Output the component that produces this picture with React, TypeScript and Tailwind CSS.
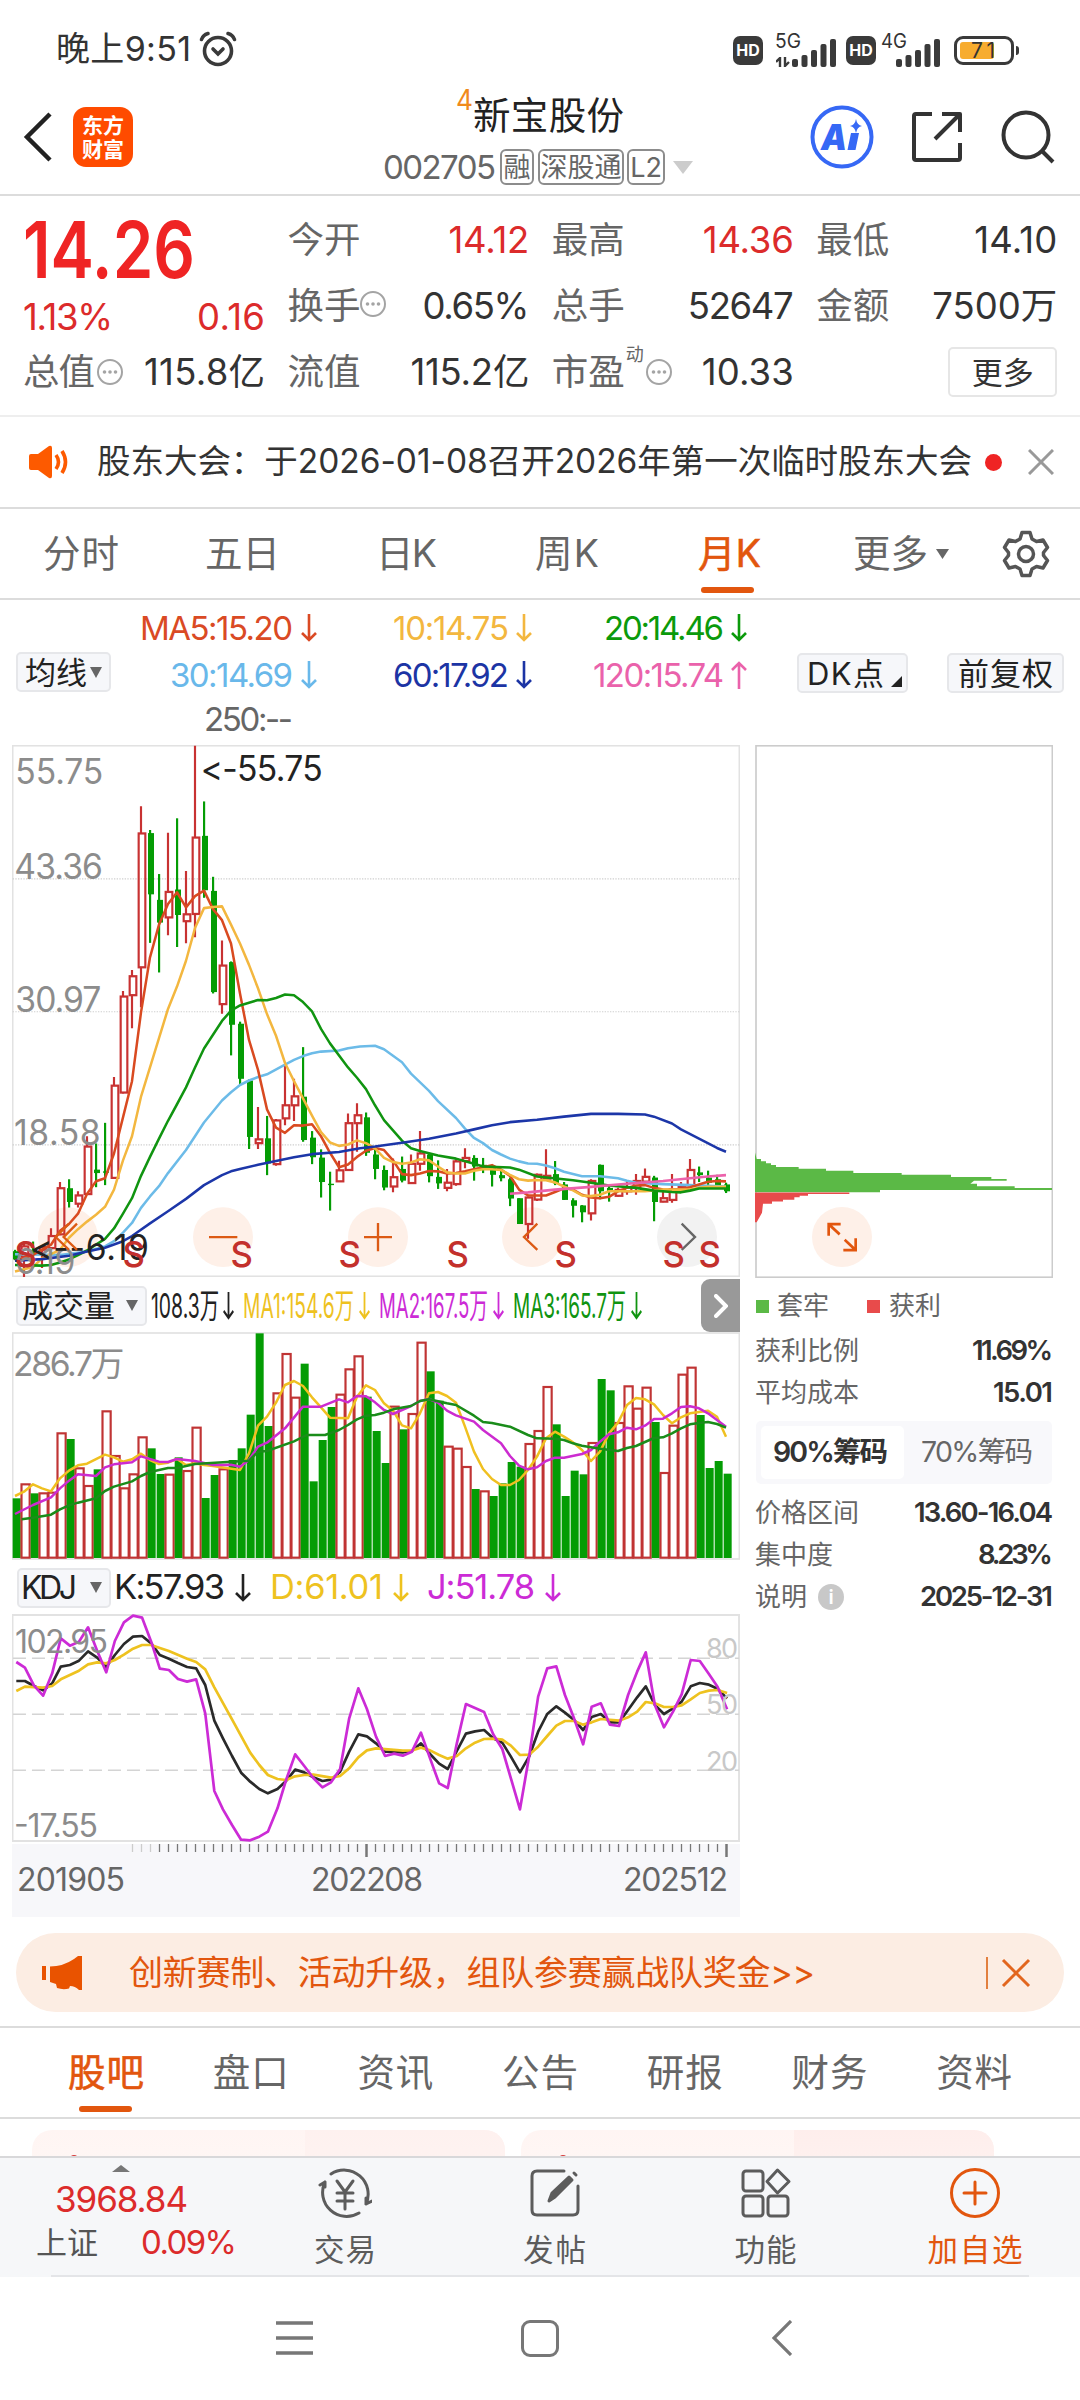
import React, { useLayoutEffect, useRef } from "react";

/* Spreads (or squeezes) a run of text over the width that its box is given. */
function Fit({ children, className = "", squeeze = false }: { children: string; className?: string; squeeze?: boolean }) {
  const outer = useRef<HTMLSpanElement>(null);
  const inner = useRef<HTMLSpanElement>(null);
  useLayoutEffect(() => {
    const box = outer.current;
    const run = inner.current;
    if (!box || !run) return;
    run.style.letterSpacing = "0px";
    run.style.transform = "none";
    const natural = run.getBoundingClientRect().width;
    const target = box.clientWidth + 2;
    if (squeeze) run.style.transform = `scaleX(${target / natural})`;
    else run.style.letterSpacing = `${(target - natural) / Math.max(1, children.length - 1)}px`;
  }, [children, squeeze]);
  return (
    <span ref={outer} className={`block shrink-0 whitespace-nowrap ${className}`}>
      <span ref={inner} className="-ml-px inline-block origin-left">
        {children}
      </span>
    </span>
  );
}

const Arrow = ({ up = false, className = "" }: { up?: boolean; className?: string }) => (
  <svg viewBox="0 0 16 28" preserveAspectRatio="none" className={`h-7 w-4 shrink-0 ${className}`} fill="none" stroke="currentColor" strokeWidth="2.6">
    <path d={up ? "M8 28V2M1 9l7-7 7 7" : "M8 0v26M1 19l7 7 7-7"} />
  </svg>
);

const Caret = ({ className = "" }: { className?: string }) => (
  <svg viewBox="0 0 12 10" preserveAspectRatio="none" className={`h-[10px] w-3 shrink-0 ${className}`} fill="currentColor">
    <path d="M0 0h12L6 10z" />
  </svg>
);

const Dots = ({ className = "" }: { className?: string }) => (
  <svg viewBox="0 0 28 28" className={`h-7 w-7 shrink-0 text-[#a4a4a4] ${className}`} fill="currentColor">
    <circle cx="14" cy="14" r="12" fill="none" stroke="currentColor" strokeWidth="2" />
    <circle cx="8.5" cy="14" r="1.8" />
    <circle cx="14" cy="14" r="1.8" />
    <circle cx="19.5" cy="14" r="1.8" />
  </svg>
);

const Hd = () => (
  <span className="flex h-[29px] w-[30px] items-center justify-center rounded-[7px] bg-[#3a3a3a] text-[16px] font-bold text-white">HD</span>
);

const Bars = ({ className = "" }: { className?: string }) => (
  <svg viewBox="0 0 44 28" className={`h-7 w-11 ${className}`} fill="#3a3a3a">
    <rect x="0" y="20" width="6" height="8" rx="2" />
    <rect x="9.500" y="16" width="6" height="12" rx="2" />
    <rect x="19" y="11" width="6" height="17" rx="2" />
    <rect x="28.500" y="5" width="6" height="23" rx="2" />
    <rect x="38" y="0" width="6" height="28" rx="2" />
  </svg>
);

function StatusBar() {
  return (
    <div className="flex h-[75px] items-start text-[#333]">
      <div className="flex h-[98px] items-center pl-[57px]">
        <Fit className="w-[133px] text-[34px]">晚上9:51</Fit>
        <svg viewBox="0 0 38 36" className="ml-[9px] h-9 w-[38px]" fill="none" stroke="#3a3a3a" strokeWidth="3.6" strokeLinecap="round">
          <circle cx="19" cy="20" r="13.5" />
          <path d="M2.5 8.5Q4 4 9 2.5M35.500 8.500Q34 4 29 2.500" />
          <path d="M14 18l5 5 5-5" />
        </svg>
      </div>
      <div className="ml-auto flex h-[100px] items-center pr-[61px]">
        <Hd />
        <div className="relative ml-[13px] h-[34px] w-[60px]">
          <span className="absolute -top-[2px] left-0">
            <Fit className="w-6 text-[20px]" squeeze>5G</Fit>
          </span>
          <svg viewBox="0 0 14 10" className="absolute bottom-0 left-0 h-[10px] w-[14px]" fill="none" stroke="#3a3a3a" strokeWidth="2.400">
            <path d="M4 10V1L0 5M9 0v9l4-4" />
          </svg>
          <Bars className="absolute right-0 bottom-0" />
        </div>
        <div className="ml-[10px]">
          <Hd />
        </div>
        <div className="relative ml-[6px] h-[34px] w-[58px]">
          <span className="absolute -top-[2px] left-0">
            <Fit className="w-6 text-[20px]" squeeze>4G</Fit>
          </span>
          <Bars className="absolute right-0 bottom-0" />
        </div>
        <div className="ml-[14px] flex h-[29px] w-[60px] items-center rounded-[9px] border-[3px] border-[#3a3a3a] p-[3px]">
          <div className="flex h-full w-[34px] items-center justify-end rounded-[3px] bg-[#f7ac2f]">
            <Fit className="w-[22px] text-[21px]">71</Fit>
          </div>
        </div>
        <div className="ml-[2px] h-[9px] w-[3px] rounded-r bg-[#3a3a3a]" />
      </div>
    </div>
  );
}

const Badge = ({ children, className }: { children: string; className: string }) => (
  <span className={`flex h-[36px] items-center justify-center rounded-[6px] border-2 border-[#8c8c8c] text-[27px] ${className}`}>{children}</span>
);

function Header() {
  return (
    <div className="flex h-[121px] items-start border-b-2 border-[#dcdcdc]">
      <svg viewBox="0 0 30 50" className="mt-[37px] ml-[22px] h-[50px] w-[30px]" fill="none" stroke="#222" strokeWidth="4.500">
        <path d="M28 2L5 25l23 23" />
      </svg>
      <div className="mt-[32px] ml-[21px] flex h-[60px] w-[60px] flex-col items-center justify-center gap-[3px] rounded-[13px] bg-[#ff4b00] text-[21px] font-bold text-white">
        <span>东方</span>
        <span>财富</span>
      </div>
      <div className="ml-[251px] flex w-[309px] flex-col">
        <div className="mt-[11px] flex h-[60px] pl-[73px]">
          <Fit className="w-[15px] text-[28px] text-[#f08a1c]" squeeze>4</Fit>
          <Fit className="mt-[11px] ml-[2px] w-[149px] text-[37.500px] text-[#222]">新宝股份</Fit>
        </div>
        <div className="mt-[3px] flex h-[36px] items-center text-[#666]">
          <Fit className="w-[111px] text-[33px]">002705</Fit>
          <Badge className="ml-[5px] w-[34px]">融</Badge>
          <Badge className="ml-1 w-[86px]">深股通</Badge>
          <Badge className="ml-[3px] w-[38px]">L2</Badge>
          <Caret className="ml-[8px] h-[13px] w-[20px] text-[#ccc]" />
        </div>
      </div>
      <svg viewBox="0 0 64 64" className="mt-[30px] ml-[117px] h-16 w-16">
        <circle cx="32" cy="32" r="29.500" fill="none" stroke="#3668f5" strokeWidth="4" />
        <text x="11" y="45" fontSize="35" fontWeight="900" fontStyle="italic" fill="#3668f5" textLength="26" lengthAdjust="spacingAndGlyphs">A</text>
        <path d="M41 28h8l-3.500 17h-8z" fill="#3668f5" />
        <path d="M46 14q1 6 6 7-5 1-6 7-1-6-6-7 5-1 6-7z" fill="#3668f5" />
      </svg>
      <svg viewBox="0 0 52 52" className="mt-[36px] ml-[37px] h-[52px] w-[52px]" fill="none" stroke="#333" strokeWidth="4" strokeLinejoin="round">
        <path d="M21 3H5q-2 0-2 2v42q0 2 2 2h42q2 0 2-2V32" />
        <path d="M31 3h18v18M49 3L24 28" />
      </svg>
      <svg viewBox="0 0 54 54" className="mt-[35px] ml-[38px] h-[54px] w-[54px]" fill="none" stroke="#333" strokeWidth="4">
        <circle cx="25" cy="25" r="22.500" />
        <path d="M40 40l12 12" />
      </svg>
    </div>
  );
}

function Quote() {
  return (
    <div className="grid h-[221px] grid-cols-[240px_240px_240px_239px] gap-x-[24.4px] border-b-2 border-[#eee] pl-6 text-[36.500px] text-[#333]">
      <div className="flex flex-col pt-[9px]">
        <div className="flex h-[90px] items-center">
          <Fit squeeze className="w-[170px] text-[78px] font-semibold text-[#ef2424]">14.26</Fit>
        </div>
        <div className="mt-[4px] flex h-9 items-center justify-between text-[#dc2b2b]">
          <Fit className="w-[88px]">1.13%</Fit>
          <Fit className="w-[66px]">0.16</Fit>
        </div>
        <div className="mt-[19px] flex h-9 items-center">
          <Fit className="w-[70px] text-[#666]">总值</Fit>
          <Dots className="ml-[2px]" />
          <Fit className="ml-auto w-[119px]">115.8亿</Fit>
        </div>
      </div>
      {[
        [
          <><Fit className="w-[71px] text-[#666]">今开</Fit><Fit className="ml-auto w-[79px] text-[#dc2b2b]">14.12</Fit></>,
          <><Fit className="w-[71px] text-[#666]">换手</Fit><Dots className="mb-1" /><Fit className="ml-auto w-[105px]">0.65%</Fit></>,
          <><Fit className="w-[71px] text-[#666]">流值</Fit><Fit className="ml-auto w-[117px]">115.2亿</Fit></>,
        ],
        [
          <><Fit className="w-[71px] text-[#666]">最高</Fit><Fit className="ml-auto w-[89px] text-[#dc2b2b]">14.36</Fit></>,
          <><Fit className="w-[71px] text-[#666]">总手</Fit><Fit className="ml-auto w-[104px]">52647</Fit></>,
          <><Fit className="w-[71px] text-[#666]">市盈</Fit><span className="mb-[34px] ml-[2px] text-[18px] text-[#666]">动</span><Dots className="ml-[1px]" /><Fit className="ml-auto w-[90px]">10.33</Fit></>,
        ],
        [
          <><Fit className="w-[71px] text-[#666]">最低</Fit><Fit className="ml-auto w-[81px]">14.10</Fit></>,
          <><Fit className="w-[71px] text-[#666]">金额</Fit><Fit className="ml-auto w-[123px]">7500万</Fit></>,
          <span className="-mr-[1px] ml-auto flex h-[50px] w-[109px] items-center justify-center rounded-[5px] border-2 border-[#e6e6e6] text-[31px]">更多</span>,
        ],
      ].map((column, c) => (
        <div key={c} className="flex flex-col gap-[30px] pt-[26px]">
          {column.map((cell, r) => (
            <div key={r} className="flex h-9 items-center">{cell}</div>
          ))}
        </div>
      ))}
    </div>
  );
}

function Notice() {
  return (
    <div className="flex h-[92px] items-center border-b-2 border-[#dcdcdc]">
      <svg viewBox="0 0 40 34" className="ml-[29px] h-[34px] w-10" fill="#fd5a00">
        <path d="M2 9h7L20 1q3-1 3 2v28q0 3-3 2L9 25H2q-2 0-2-2V11q0-2 2-2z" />
        <path d="M27 10q5 7 0 14M33 6q7 11 0 22" fill="none" stroke="#fd5a00" strokeWidth="3.600" />
      </svg>
      <Fit className="ml-[29px] w-[873px] text-[33.500px] text-[#333]">股东大会：于2026-01-08召开2026年第一次临时股东大会</Fit>
      <span className="ml-[14px] h-[17px] w-[17px] rounded-full bg-[#ef2424]" />
      <svg viewBox="0 0 26 26" className="ml-[26px] h-[26px] w-[26px]" stroke="#999" strokeWidth="3">
        <path d="M1 1l24 24M25 1L1 25" />
      </svg>
    </div>
  );
}

function PeriodTabs() {
  return (
    <div className="flex h-[91px] items-start border-b-2 border-[#dcdcdc] text-[37.500px] text-[#666]">
      <div className="flex h-[90px] items-center">
        <Fit className="ml-11 w-[74px]">分时</Fit>
        <Fit className="ml-[88px] w-[73px]">五日</Fit>
        <Fit className="ml-[98px] w-[59px]">日K</Fit>
        <Fit className="ml-[100px] w-[62px]">周K</Fit>
        <div className="relative ml-[101px] text-[#e2560e]">
          <Fit className="w-[61px] [-webkit-text-stroke:0.6px_currentColor]">月K</Fit>
          <span className="absolute -bottom-[20px] left-[2px] h-[6px] w-[53px] rounded-full bg-[#e2560e]" />
        </div>
        <Fit className="ml-[94px] w-[73px]">更多</Fit>
        <Caret className="ml-[9px] w-[13px]" />
        <svg viewBox="0 0 48 48" className="ml-[53px] h-12 w-12" fill="none" stroke="#555" strokeWidth="3.500" strokeLinejoin="round">
          <path d="M20 2.500h8l2 6.500 4.500 2.500 6.500-1.500 4.500 7.500-4 5v3l4 5-4.500 7.500-6.500-1.500-4.500 2.500-2 6.500h-8l-2-6.500-4.500-2.500-6.500 1.500-4.500-7.500 4-5v-3l-4-5L7 10l6.500 1.500L18 9z" />
          <circle cx="24" cy="24" r="7.500" />
        </svg>
      </div>
    </div>
  );
}

const Chip = ({ children, className }: { children: React.ReactNode; className: string }) => (
  <span className={`flex h-[40px] shrink-0 items-center rounded-[5px] border-2 border-[#e6e7ea] bg-[#f6f7fa] text-[#222] ${className}`}>{children}</span>
);

function MaLegend() {
  return (
    <div className="flex h-[145px] text-[33px]">
      <Chip className="mt-[52px] ml-[16px] w-[95px] pl-2 text-[31px]">
        <Fit className="w-[60px]">均线</Fit>
        <Caret className="ml-1 h-[11px] text-[#666]" />
      </Chip>
      <div className="grid h-[142px] w-[206px] grid-rows-[50px_44px_45px] items-center justify-items-end pt-[3px]">
        <div className="flex items-center text-[#da4a24]"><Fit className="w-[151px]">MA5:15.20</Fit><Arrow className="ml-[9px]" /></div>
        <div className="flex items-center text-[#69b8ea]"><Fit className="w-[121px]">30:14.69</Fit><Arrow className="ml-[9px]" /></div>
        <div className="mr-[25px] text-[#666]"><Fit className="w-[87px]">250:--</Fit></div>
      </div>
      <div className="grid h-[97px] w-[215px] grid-rows-[50px_44px] items-center justify-items-end pt-[3px]">
        <div className="flex items-center text-[#f3b73f]"><Fit className="w-[114px]">10:14.75</Fit><Arrow className="ml-[8px]" /></div>
        <div className="flex items-center text-[#1c34a4]"><Fit className="w-[114px]">60:17.92</Fit><Arrow className="ml-[8px]" /></div>
      </div>
      <div className="grid h-[97px] w-[215px] grid-rows-[50px_44px] items-center justify-items-end pt-[3px]">
        <div className="flex items-center text-[#0b9a0b]"><Fit className="w-[118px]">20:14.46</Fit><Arrow className="ml-[8px]" /></div>
        <div className="flex items-center text-[#ea62ab]"><Fit className="w-[129px]">120:15.74</Fit><Arrow up className="ml-[8px]" /></div>
      </div>
      <Chip className="mt-[53px] ml-[50px] w-[111px] pl-[9px] text-[31px]">
        <Fit className="w-[75px]">DK点</Fit>
        <svg viewBox="0 0 11 11" className="mt-[17px] ml-[8px] h-[11px] w-[11px]" fill="#222"><path d="M11 0v11H0z" /></svg>
      </Chip>
      <Chip className="mt-[53px] ml-[39px] w-[117px] pl-[10px] text-[31px]">
        <Fit className="w-[93px]">前复权</Fit>
      </Chip>
    </div>
  );
}

/* [rising, high, body top, body bottom, low] for each month, in plot units. */
const candles: [0 | 1, number, number, number, number][] = [
  [0, 1480, 1484, 1508, 1510], [1, 1455, 1470, 1500, 1562], [0, 1456, 1480, 1495, 1500], [1, 1468, 1472, 1480, 1533],
  [1, 1417, 1440, 1475, 1478], [1, 1283, 1301, 1435, 1438], [0, 1275, 1301, 1341, 1357], [1, 1310, 1322, 1346, 1357],
  [1, 1150, 1180, 1318, 1320], [0, 1171, 1247, 1257, 1298], [0, 1111, 1252, 1256, 1292], [1, 978, 1003, 1271, 1273],
  [1, 728, 744, 1023, 1026], [1, 667, 685, 740, 836], [1, 191, 270, 659, 775], [0, 260, 269, 447, 588],
  [0, 388, 463, 529, 674], [1, 268, 440, 514, 566], [0, 226, 433, 507, 600], [1, 379, 505, 525, 589],
  [1, 15, 282, 504, 572], [0, 177, 277, 435, 457], [0, 396, 437, 731, 735], [1, 581, 654, 766, 794],
  [0, 642, 644, 826, 915], [0, 817, 823, 983, 1001], [0, 985, 988, 1152, 1187], [1, 1065, 1159, 1170, 1187],
  [0, 1091, 1156, 1229, 1263], [1, 1100, 1104, 1231, 1236], [1, 940, 1060, 1098, 1118], [1, 983, 1034, 1060, 1106],
  [0, 891, 1035, 1161, 1166], [0, 1135, 1154, 1211, 1231], [0, 1188, 1212, 1283, 1328], [0, 1253, 1288, 1292, 1366],
  [1, 1221, 1249, 1281, 1283], [1, 1084, 1112, 1248, 1250], [1, 1054, 1089, 1112, 1195], [0, 1081, 1095, 1198, 1207],
  [0, 1188, 1203, 1245, 1275], [0, 1235, 1248, 1299, 1307], [1, 1215, 1269, 1296, 1313], [0, 1209, 1245, 1279, 1284],
  [1, 1203, 1230, 1286, 1288], [1, 1135, 1200, 1230, 1250], [0, 1200, 1203, 1266, 1284], [0, 1220, 1268, 1287, 1303],
  [1, 1245, 1285, 1300, 1310], [1, 1218, 1223, 1289, 1294], [1, 1185, 1213, 1222, 1243], [0, 1205, 1213, 1238, 1279],
  [0, 1213, 1233, 1240, 1257], [0, 1233, 1240, 1262, 1296], [0, 1250, 1263, 1272, 1281], [0, 1270, 1275, 1331, 1353],
  [0, 1330, 1330, 1405, 1405], [1, 1325, 1328, 1405, 1448], [1, 1258, 1262, 1334, 1338], [1, 1188, 1265, 1273, 1278],
  [0, 1222, 1260, 1287, 1292], [0, 1283, 1290, 1335, 1335], [0, 1330, 1336, 1352, 1386], [0, 1350, 1351, 1371, 1400],
  [1, 1275, 1280, 1374, 1395], [0, 1232, 1233, 1310, 1333], [0, 1290, 1300, 1312, 1340], [1, 1300, 1306, 1323, 1325],
  [1, 1280, 1299, 1310, 1320], [1, 1260, 1280, 1300, 1320], [1, 1244, 1268, 1282, 1290], [0, 1265, 1270, 1341, 1397],
  [1, 1310, 1330, 1340, 1342], [1, 1260, 1304, 1335, 1343], [1, 1283, 1297, 1303, 1310], [1, 1216, 1248, 1292, 1295],
  [0, 1238, 1255, 1263, 1283], [0, 1250, 1270, 1285, 1300], [0, 1262, 1275, 1297, 1300], [0, 1285, 1290, 1310, 1315],
];

const averages: [string, string][] = [
  ["#6cbbe8", "45,1493 180,1495 261,1485 315,1470 342,1455 369,1430 396,1402 423,1358 450,1325 477,1295 504,1257 558,1190 612,1110 666,1046 693,1022 720,1001 747,988 774,978 801,970 855,942 882,928 909,917 936,909 963,904 1017,901 1044,894 1080,889 1125,887 1152,897 1206,935 1233,968 1287,1018 1314,1048 1368,1097 1395,1128 1422,1155 1449,1170 1476,1190 1503,1203 1530,1215 1557,1223 1584,1229 1611,1230 1638,1235 1665,1243 1692,1253 1746,1266 1800,1266 1854,1272 1881,1279 1908,1285 1989,1289 2070,1292 2178,1296"],
  ["#d94a20", "45,1512 99,1495 153,1465 180,1425 207,1405 234,1375 261,1318 288,1281 315,1272 342,1200 369,1095 396,990 423,790 450,630 477,535 504,475 531,441 558,485 585,452 612,436 639,490 666,522 693,590 720,735 747,870 774,957 801,1072 828,1125 855,1140 882,1118 909,1119 936,1115 963,1150 990,1198 1017,1240 1044,1232 1071,1210 1098,1192 1125,1184 1152,1190 1179,1220 1206,1260 1233,1263 1260,1258 1287,1251 1314,1252 1341,1258 1368,1257 1395,1252 1422,1246 1449,1240 1476,1234 1503,1247 1530,1265 1557,1305 1584,1322 1638,1322 1665,1312 1692,1301 1719,1305 1746,1320 1773,1328 1800,1330 1827,1326 1854,1310 1881,1300 1908,1293 1935,1292 1962,1300 1989,1305 2016,1306 2043,1303 2070,1298 2097,1290 2124,1282 2151,1280 2178,1281"],
  ["#f3b73f", "45,1543 99,1530 126,1505 180,1480 207,1445 234,1420 261,1398 288,1378 315,1355 342,1305 369,1220 396,1150 423,1035 450,950 477,865 504,780 531,715 558,640 585,545 612,487 639,484 666,482 693,535 720,590 747,652 774,720 801,795 828,858 855,937 882,990 909,1040 936,1090 963,1138 990,1168 1017,1178 1044,1174 1071,1162 1098,1170 1125,1185 1152,1213 1179,1225 1206,1230 1233,1226 1260,1217 1287,1220 1314,1238 1341,1255 1368,1258 1395,1258 1422,1250 1449,1246 1476,1246 1503,1248 1530,1262 1557,1275 1584,1279 1611,1277 1638,1278 1665,1284 1692,1296 1719,1307 1746,1322 1773,1324 1800,1320 1827,1310 1854,1310 1935,1310 1989,1305 2070,1305 2097,1300 2124,1297 2178,1297"],
  ["#109410", "45,1524 126,1526 153,1524 180,1517 207,1508 234,1495 261,1482 288,1465 315,1448 342,1418 369,1375 396,1330 423,1265 450,1210 477,1157 504,1105 531,1057 558,1008 585,950 612,895 639,855 666,815 693,785 720,770 747,762 774,754 801,755 828,748 855,738 882,740 909,760 936,787 963,838 990,880 1044,950 1071,980 1098,1013 1125,1060 1152,1103 1179,1133 1206,1163 1233,1185 1260,1193 1314,1206 1368,1215 1422,1230 1449,1238 1530,1241 1557,1247 1611,1267 1719,1278 1773,1285 1827,1293 1908,1300 1962,1308 2016,1312 2043,1313 2070,1308 2097,1302 2178,1302"],
  ["#1c36a8", "45,1512 126,1507 207,1497 261,1485 315,1474 369,1455 396,1440 450,1403 504,1368 558,1332 612,1292 666,1263 693,1252 720,1245 774,1233 828,1222 882,1211 936,1202 1017,1196 1080,1185 1125,1180 1206,1169 1287,1157 1368,1142 1422,1130 1476,1118 1530,1109 1611,1102 1692,1093 1773,1085 1854,1085 1935,1087 1962,1093 2016,1113 2043,1130 2097,1157 2151,1184 2178,1195"],
  ["#ec62ab", "1530,1317 1584,1313 1665,1305 1773,1297 1881,1288 1989,1280 2070,1272 2124,1267 2178,1263"],
];

function PriceChart() {
  return (
    <svg viewBox="36 13 2184 1546" preserveAspectRatio="none" className="block h-[532px] w-[728px] [font-variant-ligatures:none] [font-feature-settings:'calt'_0]" fill="none" fontSize="101">
      <rect x="38" y="15" width="2180" height="1542" stroke="#e2e2e2" strokeWidth="5" />
      {[402, 788, 1175].map((y) => (
        <path key={y} d={`M38 ${y}H2218`} stroke="#d0d0d0" strokeWidth="3" strokeDasharray="4 4" />
      ))}
      {[204, 669, 1134, 1596].map((x) => (
        <ellipse key={x} cx={x} cy="1443" rx="90" ry="87" fill="#fef0e8" />
      ))}
      <ellipse cx="2061" cy="1443" rx="90" ry="87" fill="#f2f2f2" />
      {candles.map(([up, high, top, bottom, low], i) => {
        const x = 45 + 27 * i;
        return up ? (
          <g key={i} stroke="#c83232" strokeWidth="6.500">
            <path d={`M${x} ${high}V${top}M${x} ${bottom}V${low}`} />
            <rect x={x - 7} y={top} width="20" height={bottom - top} />
          </g>
        ) : (
          <g key={i} fill="#049c04">
            <rect x={x - 3} y={high} width="6.500" height={low - high} />
            <rect x={x - 6} y={top} width="18" height={bottom - top} />
          </g>
        );
      })}
      {averages.map(([color, points]) => (
        <polyline key={color} points={points} stroke={color} strokeWidth="7.500" strokeLinejoin="round" />
      ))}
      <g fill="#8c8c8c">
        <text x="46" y="125" textLength="264">55.75</text>
        <text x="43" y="402" textLength="266">43.36</text>
        <text x="46" y="790" textLength="258">30.97</text>
        <text x="42" y="1176" textLength="260">18.58</text>
        <text x="46" y="1550" textLength="180">6.19</text>
      </g>
      <g fill="#222">
        <text x="602" y="119" textLength="366">&lt;-55.75</text>
        <text x="91" y="1510" textLength="356">&lt;--6.19</text>
      </g>
      <g stroke="#dc5a14" strokeWidth="7">
        <path d="M207 1404l-40 39 40 37M231 1404l-40 39 40 37" />
        <path d="M627 1443h85M1092 1443h84M1134 1402v82M1612 1404l-40 39 40 37" />
        <path d="M2045 1404l40 39-40 37" stroke="#666" />
      </g>
      <g fill="#c3302c" fontSize="104" fontWeight="500" textAnchor="middle">
        {[77, 401, 725, 1049, 1373, 1697, 2021, 2129].map((x) => (
          <text key={x} x={x} y="1529">S</text>
        ))}
      </g>
    </svg>
  );
}

/* Top edge of each month's bar; falling months are negative. */
const volumes = [
  -685, 643, -670, 670, 668, 490, -507, 595, 648, -598, 424, 558, 655, 613, 502, -535, -612, 614, -562, 603,
  473, -684, -615, 598, -570, -535, -434, -190, -468, 370, 252, 383, -281, -634, -510, -411, 374, 298, 259, -380,
  -483, -579, 410, -478, 432, 218, -304, -392, 530, 536, 591, -657, 664, -678, -640, -576, -590, 522, 483, 351,
  -463, -678, -602, -613, 519, -327, -361, 459, 349, 416, 353, -456, 609, 467, 314, 293, -435, -594, -573, -611,
];

const volumeLines: [string, string][] = [
  ["#f0c020", "45,678 72,665 99,643 126,655 153,664 180,625 207,602 234,586 261,581 315,554 342,562 369,575 396,568 423,551 450,570 477,582 504,578 531,567 558,585 585,580 612,585 639,588 720,600 747,550 774,467 801,440 828,398 855,345 882,333 909,348 936,382 963,412 990,443 1044,445 1071,380 1098,346 1125,360 1152,400 1179,422 1206,466 1233,475 1260,430 1287,370 1314,366 1341,378 1368,398 1395,470 1422,545 1449,597 1476,627 1503,645 1530,645 1557,630 1584,600 1611,560 1638,505 1665,485 1692,500 1719,517 1746,540 1773,573 1800,545 1827,490 1854,458 1881,405 1908,384 1935,388 1962,403 1989,435 2016,460 2043,442 2070,430 2097,426 2124,422 2151,440 2178,500"],
  ["#cc2bd0", "45,732 99,705 153,682 180,655 207,632 234,613 288,618 315,592 342,583 396,577 423,559 477,575 504,576 531,567 585,573 639,585 693,584 720,590 747,570 774,530 801,518 855,475 909,410 963,410 1017,388 1044,397 1071,378 1098,379 1125,397 1152,420 1179,432 1206,420 1233,408 1260,393 1287,387 1314,398 1341,422 1368,436 1422,455 1449,480 1503,520 1530,558 1557,587 1584,598 1611,592 1638,573 1665,563 1692,563 1746,552 1773,540 1800,515 1827,493 1854,487 1881,473 1908,478 1935,467 1962,447 1989,446 2016,430 2043,411 2070,409 2097,415 2124,430 2178,470"],
  ["#1a8c1a", "65,748 99,743 153,734 180,718 207,706 234,698 288,685 315,663 342,650 396,634 423,618 450,606 504,594 531,594 585,582 693,575 747,572 774,545 801,543 882,514 920,495 975,495 1017,480 1044,465 1071,448 1098,437 1125,435 1152,428 1179,418 1233,408 1260,393 1287,388 1341,400 1368,405 1422,437 1449,456 1476,459 1530,470 1584,495 1611,505 1665,506 1692,510 1719,520 1746,527 1800,536 1854,543 1881,534 1908,528 1962,504 1989,502 2016,490 2043,475 2070,463 2097,459 2124,456 2151,462 2178,473"],
];

function VolumeChart() {
  return (
    <svg viewBox="36 186 2184 684" preserveAspectRatio="none" className="block h-[228px] w-[728px]" fill="none" fontSize="101">
      <rect x="38" y="189" width="2180" height="678" stroke="#e2e2e2" strokeWidth="5" />
      {volumes.map((v, i) =>
        v < 0 ? (
          <rect key={i} x={38 + 27 * i} y={-v} width="24" height={864 + v} fill="#049c04" />
        ) : (
          <rect key={i} x={37.5 + 27 * i} y={v} width="24.500" height={863 - v} fill="#fff" stroke="#c03434" strokeWidth="6.500" />
        ),
      )}
      {volumeLines.map(([color, points]) => (
        <polyline key={color} points={points} stroke={color} strokeWidth="7.500" strokeLinejoin="round" />
      ))}
      <text x="39" y="319" fill="#8c8c8c" textLength="334">286.7万</text>
    </svg>
  );
}

const kdjLines: [string, string][] = [
  ["#2a2a2a", "34,303 52,303 71,318 90,331 109,310 127,260 146,255 165,242 184,214 203,233 222,261 240,225 259,192 278,170 297,168 316,190 334,225 353,236 372,249 391,261 410,265 429,315 448,422 466,475 485,528 504,578 523,605 542,627 560,640 580,627 598,603 617,569 636,577 655,592 674,603 692,599 711,575 730,515 749,463 767,469 786,490 805,515 842,517 861,513 880,490 899,522 918,551 936,567 955,513 974,461 993,454 1012,450 1031,475 1050,488 1068,530 1087,577 1106,530 1125,455 1144,402 1163,379 1181,398 1200,420 1219,450 1237,411 1256,402 1275,427 1294,427 1313,390 1332,352 1350,319 1369,375 1388,402 1407,385 1425,365 1444,319 1463,309 1482,314 1500,326 1520,355"],
  ["#eec21f", "34,333 52,320 90,323 109,318 127,298 165,272 184,253 203,247 222,250 240,240 259,224 278,206 297,195 316,195 334,204 353,213 391,236 410,246 429,268 448,322 485,418 523,518 542,555 560,585 580,597 598,600 617,589 636,585 655,584 692,593 711,588 730,565 749,532 767,511 786,505 842,512 861,511 880,503 899,511 918,525 936,536 955,528 974,505 993,488 1012,477 1031,476 1050,479 1068,497 1087,525 1106,524 1125,500 1144,468 1163,437 1181,423 1200,423 1219,434 1237,427 1256,417 1294,422 1313,412 1332,395 1350,366 1369,370 1388,381 1407,381 1425,376 1444,358 1463,339 1482,332 1500,330 1520,339"],
  ["#cc2bd6", "34,246 52,263 71,317 90,347 109,280 127,175 146,197 165,185 184,142 203,212 222,277 240,183 259,127 278,107 297,113 316,185 334,266 353,270 372,297 391,305 410,298 429,400 448,633 466,688 485,735 504,779 523,781 542,770 560,755 580,685 598,600 617,523 636,558 655,594 674,622 692,607 711,567 730,415 749,325 767,387 786,470 805,528 824,521 842,527 861,515 880,458 899,535 918,610 936,624 955,490 974,372 993,384 1012,396 1031,463 1050,507 1068,595 1087,688 1106,530 1125,350 1144,265 1163,259 1181,345 1200,415 1219,493 1237,380 1256,370 1275,434 1294,438 1313,345 1332,275 1350,217 1369,375 1388,442 1407,395 1425,343 1444,240 1463,243 1482,282 1500,320 1520,388"],
];

function KdjChart() {
  return (
    <div className="relative h-[228px] w-[728px]">
      <svg viewBox="25 102 1522 684" preserveAspectRatio="none" className="block h-full w-full" fill="none">
        <rect x="26" y="105" width="1519" height="678" stroke="#e2e2e2" strokeWidth="2" vectorEffect="non-scaling-stroke" />
        {[235, 403, 571].map((y) => (
          <path key={y} d={`M27 ${y}H1545`} stroke="#d4d4d4" strokeWidth="1.500" strokeDasharray="13 6" vectorEffect="non-scaling-stroke" />
        ))}
        {kdjLines.map(([color, points]) => (
          <polyline key={color} points={points} stroke={color} strokeWidth="2.700" strokeLinejoin="round" vectorEffect="non-scaling-stroke" />
        ))}
      </svg>
      <svg viewBox="12 1614 728 228" className="absolute inset-0 h-full w-full" fill="#8c8c8c" fontSize="32">
        <text x="15" y="1652.500" textLength="93">102.95</text>
        <text x="14" y="1837" textLength="84">-17.55</text>
        <g fill="#c8c8c8" fontSize="27">
          <text x="706" y="1658" textLength="32">80</text>
          <text x="706" y="1714" textLength="32">50</text>
          <text x="706" y="1771" textLength="32">20</text>
        </g>
      </svg>
    </div>
  );
}

function TimeAxis() {
  return (
    <div className="mt-[2px] flex h-[73px] w-[728px] flex-col bg-[#f7f7fa]">
      <svg viewBox="12 0 728 14" className="h-[14px] w-full">
        {Array.from({ length: 67 }, (_, k) => {
          const i = k + 13;
          const major = i === 39 || i === 79;
          return <path key={i} d={`M${15.500 + 9 * i} 0V${major ? 13 : 8}`} stroke={i < 16 ? "#ccc" : "#777"} strokeWidth={major ? 2.500 : 1.300} />;
        })}
      </svg>
      <div className="flex h-[44px] items-center text-[32px] text-[#666]">
        <Fit className="ml-[6px] w-[106px]">201905</Fit>
        <Fit className="ml-[188px] w-[110px]">202208</Fit>
        <Fit className="ml-[202px] w-[103px]">202512</Fit>
      </div>
    </div>
  );
}

function ChipChart() {
  return (
    <svg viewBox="45 14 894 1492" preserveAspectRatio="none" className="block h-[533px] w-[298px]" fill="none">
      <rect x="48" y="16" width="889" height="1488" stroke="#cccccc" strokeWidth="5" />
      <path d="M45 1155L50 1173H63V1179H78V1185H93V1190H108V1195H176V1200H258V1206H340V1212H485V1217H633V1223H754V1229H800V1234H702L691 1242H711V1249H824V1254H936V1260H420V1266H45z" fill="#5bb946" />
      <path d="M45 1267H328V1271H204V1276H179V1280H163V1287H129V1292H96V1298H69L66 1323 50 1350H45z" fill="#e84b4b" />
      <ellipse cx="306" cy="1391" rx="90" ry="84" fill="#fef0e8" />
      <path d="M302 1355H266V1388M266 1355L299 1384M310 1428H347V1395M347 1428L314 1399" stroke="#e2560e" strokeWidth="8" />
    </svg>
  );
}

const Stat = ({ label, value, labelWidth, valueWidth, info }: { label: string; value: string; labelWidth: string; valueWidth: string; info?: boolean }) => (
  <div className="flex h-[42px] items-center">
    <Fit className={`text-[26px] text-[#666] ${labelWidth}`}>{label}</Fit>
    {info && <span className="ml-3 flex h-[26px] w-[26px] items-center justify-center rounded-full bg-[#c8c8c8] text-[20px] font-semibold text-white">i</span>}
    <Fit className={`ml-auto text-[27.500px] font-semibold text-[#333] ${valueWidth}`}>{value}</Fit>
  </div>
);

function ChipStats() {
  return (
    <div className="w-[296px]">
      <div className="flex h-[42px] items-center pt-[14px] text-[26px] text-[#666]">
        <span className="h-[13px] w-[13px] bg-[#5bb946]" />
        <Fit className="ml-[9px] w-[50px]">套牢</Fit>
        <span className="ml-[39px] h-[13px] w-[13px] bg-[#e84b4b]" />
        <Fit className="ml-[10px] w-[50px]">获利</Fit>
      </div>
      <div className="mt-[10px]">
        <Stat label="获利比例" value="11.69%" labelWidth="w-[102px]" valueWidth="w-[79px]" />
        <Stat label="平均成本" value="15.01" labelWidth="w-[102px]" valueWidth="w-[58px]" />
      </div>
      <div className="mt-[7px] flex h-[63px] items-center rounded-[5px] bg-[#f8f8fb] p-[5px] text-[28.500px]">
        <span className="flex h-[53px] w-[143px] items-center justify-center rounded-[5px] bg-white pr-[4px] font-semibold text-[#333]">
          <Fit className="w-[113px]">90%筹码</Fit>
        </span>
        <span className="flex flex-1 justify-center pl-[3px] text-[#666]">
          <Fit className="w-[110px]">70%筹码</Fit>
        </span>
      </div>
      <div className="mt-[8px]">
        <Stat label="价格区间" value="13.60-16.04" labelWidth="w-[102px]" valueWidth="w-[137px]" />
        <Stat label="集中度" value="8.23%" labelWidth="w-[76px]" valueWidth="w-[73px]" />
        <Stat label="说明" value="2025-12-31" labelWidth="w-[50px]" valueWidth="w-[131px]" info />
      </div>
    </div>
  );
}

function Charts() {
  return (
    <div className="flex h-[1172px] pl-3">
      <div className="w-[728px]">
        <PriceChart />
        <div className="flex h-[57px] items-center text-[34px]">
          <Chip className="ml-1 w-[131px] pl-[5px] text-[31px]">
            <Fit className="w-[91px]">成交量</Fit>
            <Caret className="ml-3 h-[11px] text-[#666]" />
          </Chip>
          <div className="ml-[5px] flex items-center text-[#222]"><Fit squeeze className="w-[66px]">108.3万</Fit><Arrow className="ml-[5px] w-[11px]" /></div>
          <div className="ml-[10px] flex items-center text-[#eec21f]"><Fit squeeze className="w-[109px]">MA1:154.6万</Fit><Arrow className="ml-[6px] w-[11px]" /></div>
          <div className="ml-[10px] flex items-center text-[#cc2bd6]"><Fit squeeze className="w-[107px]">MA2:167.5万</Fit><Arrow className="ml-[6px] w-[11px]" /></div>
          <div className="ml-[10px] flex items-center text-[#109410]"><Fit squeeze className="w-[111px]">MA3:165.7万</Fit><Arrow className="ml-[6px] w-[11px]" /></div>
          <span className="ml-auto flex h-[53px] w-[39px] items-center justify-center rounded-l-[9px] bg-[#999]">
            <svg viewBox="0 0 14 24" className="h-6 w-[14px]" fill="none" stroke="#fff" strokeWidth="4" strokeLinecap="round"><path d="M2 2l10 10L2 22" /></svg>
          </span>
        </div>
        <div className="-mt-[2px]">
          <VolumeChart />
        </div>
        <div className="flex h-[54px] items-center pt-px text-[34.500px]">
          <Chip className="ml-[5px] w-[94px] pl-[3px] text-[32px]">
            <Fit className="w-[54px]">KDJ</Fit>
            <Caret className="ml-[14px] h-[11px] text-[#666]" />
          </Chip>
          <Fit className="ml-1 w-[109px] text-[#222]">K:57.93</Fit>
          <Arrow className="ml-[11px] text-[#222]" />
          <Fit className="ml-[20px] w-[111px] text-[#eec21f]">D:61.01</Fit>
          <Arrow className="ml-[11px] text-[#eec21f]" />
          <Fit className="ml-[19px] w-[106px] text-[#cc2bd6]">J:51.78</Fit>
          <Arrow className="ml-[11px] text-[#cc2bd6]" />
        </div>
        <KdjChart />
        <TimeAxis />
      </div>
      <div className="ml-[15px]">
        <ChipChart />
        <div className="pl-px">
          <ChipStats />
        </div>
      </div>
    </div>
  );
}

function Banner() {
  return (
    <div className="mx-4 mt-4 flex h-[79px] items-center rounded-full bg-[#fcede3] text-[#e2560e]">
      <svg viewBox="0 0 40 34" className="ml-[26px] h-[34px] w-10" fill="#e95300">
        <path d="M0 10h4v14H0zM8 10.500q13 0 24-7.500l4-3h4v34h-3q-4-4-9-4l-1 2.500q-6 1.500-12-.5l-1-4-6-2z" />
      </svg>
      <Fit className="ml-[48px] w-[684px] text-[34px]">创新赛制、活动升级，组队参赛赢战队奖金&gt;&gt;</Fit>
      <span className="ml-auto h-8 w-[2px] bg-[#e2803f]" />
      <svg viewBox="0 0 30 30" className="mr-[33px] ml-[13px] h-[30px] w-[30px]" stroke="#e2661e" strokeWidth="3">
        <path d="M2 2l26 26M28 2L2 28" />
      </svg>
    </div>
  );
}

function SectionTabs() {
  return (
    <div className="mt-[14px] flex h-[93px] gap-[70.700px] border-y-2 border-[#dcdcdc] pt-[26px] pl-[69px] text-[37.500px] text-[#666]">
      <div className="relative text-[#e2560e]">
        <Fit className="w-[74px] [-webkit-text-stroke:0.6px_currentColor]">股吧</Fit>
        <span className="absolute top-[52px] left-[10px] h-[6px] w-[53px] rounded-full bg-[#e2560e]" />
      </div>
      {["盘口", "资讯", "公告", "研报", "财务", "资料"].map((name) => (
        <Fit key={name} className="w-[74px]">{name}</Fit>
      ))}
    </div>
  );
}

function Posts() {
  return (
    <div className="flex h-[37px] gap-4 overflow-hidden pt-[11px] pl-8">
      {["from-[#fef1ef]", "from-[#feeeec]"].map((tone) => (
        <div key={tone} className="relative h-16 w-[473px] overflow-hidden rounded-[20px] bg-gradient-to-b from-[#fff5f3] to-[#fef8f6]">
          <div className={`h-full w-[200px] translate-x-[273px] bg-gradient-to-b to-[#fef4f2] ${tone}`} />
          <span className="absolute top-[25px] left-[37px] h-3 w-[10px] rounded-full bg-[#d63a3a]" />
        </div>
      ))}
    </div>
  );
}

const Action = ({ label, width, children, className = "" }: { label: string; width: string; children: React.ReactNode; className?: string }) => (
  <div className={`flex flex-col items-center pt-[8px] text-[30.500px] ${className}`}>
    <svg viewBox="0 0 54 54" className="h-[54px] w-[54px]" fill="none" stroke="currentColor" strokeWidth="3" strokeLinecap="round" strokeLinejoin="round">
      {children}
    </svg>
    <Fit className={`mt-[15px] ${width}`}>{label}</Fit>
  </div>
);

function BottomBar() {
  return (
    <div className="relative flex h-[121px] border-t-2 border-[#d8d8da] bg-[#f6f7f9] text-[#5c5c5c]">
      <div className="w-[242px]">
        <svg viewBox="0 0 18 7" className="mt-[7px] ml-[112px] h-[7px] w-[18px]" fill="#777"><path d="M9 0l9 7H0z" /></svg>
        <Fit className="mt-[10px] ml-[56px] w-[131px] text-[35px] text-[#dc2b2b]">3968.84</Fit>
        <div className="mt-[9px] ml-[37px] flex items-center text-[31px]">
          <Fit className="w-[60px] text-[#555]">上证</Fit>
          <Fit className="ml-[45px] w-[94px] text-[33px] text-[#dc2b2b]">0.09%</Fit>
        </div>
      </div>
      <Action label="交易" width="w-[60px]" className="w-[206px]">
        <path d="M13 8A24 24 0 0 1 48 38M41 47A24 24 0 0 1 7 16M7 16l-5 3M7 16v5M48 38l6-3M48 38l0-6" />
        <path d="M19 15l8 11 8-11M27 26v17M19 27h16M19 35h16" />
      </Action>
      <Action label="发帖" width="w-[61px]" className="w-[213px]">
        <path d="M36 5H9Q4 5 4 10V44Q4 49 9 49H45Q50 49 50 44V20" />
        <path d="M21 35l3-8L41 11l3 3-17 17zM46 7l2 2" fill="currentColor" />
      </Action>
      <Action label="功能" width="w-[60px]" className="w-[209px]">
        <rect x="4" y="5" width="20" height="20" rx="3" />
        <rect x="4" y="30" width="20" height="20" rx="3" />
        <rect x="29" y="30" width="20" height="20" rx="3" />
        <path d="M38.500 4L50 15.500 38.500 27 28 15.500z" />
      </Action>
      <Action label="加自选" width="w-[93px]" className="w-[210px] text-[#e2560e]">
        <circle cx="27" cy="27" r="23.500" />
        <path d="M27 16v22M16 27h22" />
      </Action>
      <span className="absolute bottom-0 left-[51px] h-[2px] w-[978px] bg-[#e4e5e8]" />
    </div>
  );
}

function NavBar() {
  return (
    <div className="flex h-[122px] items-center text-[#777]">
      <svg viewBox="0 0 38 34" className="ml-[276px] h-[34px] w-[38px]" stroke="currentColor" strokeWidth="3.500">
        <path d="M0 2h37M0 17h37M0 32h37" />
      </svg>
      <span className="ml-[207px] h-[37px] w-[38px] rounded-[9px] border-[3.5px] border-current" />
      <svg viewBox="0 0 20 36" className="ml-[213px] h-9 w-5" fill="none" stroke="currentColor" strokeWidth="3.200">
        <path d="M19 1L2 18l17 17" />
      </svg>
    </div>
  );
}

export default function App() {
  return (
    <div className="h-[2400px] w-[1080px] overflow-hidden bg-white font-['Inter','Noto_Sans_CJK_SC',sans-serif] leading-none">
      <StatusBar />
      <Header />
      <Quote />
      <Notice />
      <PeriodTabs />
      <MaLegend />
      <Charts />
      <Banner />
      <SectionTabs />
      <Posts />
      <BottomBar />
      <NavBar />
    </div>
  );
}
